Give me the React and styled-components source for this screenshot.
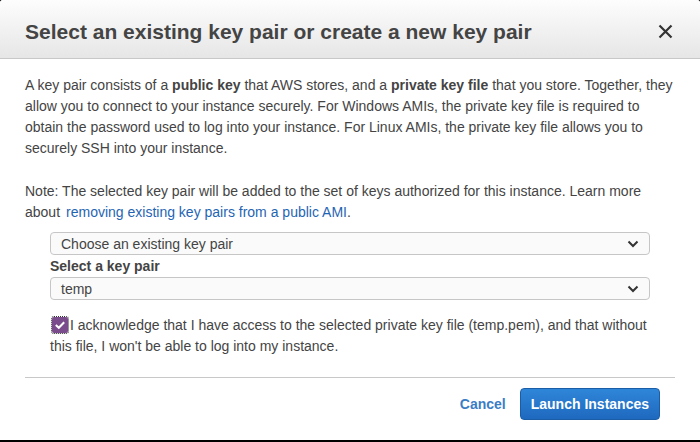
import React, { useState } from 'react';
import styled, { createGlobalStyle } from 'styled-components';

const GlobalStyle = createGlobalStyle`
  html, body {
    margin: 0;
    padding: 0;
    background: #000;
  }
  body {
    font-family: "Liberation Sans", Arial, sans-serif;
    color: #444;
  }
`;

const Modal = styled.div`
  width: 700px;
  height: 440px;
  background: #fff;
  border-radius: 3px 3px 0 0;
  overflow: hidden;
  display: flex;
  flex-direction: column;
`;

const Header = styled.div`
  height: 59px;
  box-sizing: border-box;
  padding: 5px 25px 0;
  display: flex;
  align-items: center;
  justify-content: space-between;
  background: linear-gradient(to bottom, #fdfdfd, #e6e6e6);
  border-bottom: 1px solid #c8c8c8;
`;

const Title = styled.h2`
  margin: 0;
  font-size: 21px;
  font-weight: bold;
  color: #444;
`;

const CloseButton = styled.button`
  border: none;
  background: none;
  padding: 0;
  margin-right: 1px;
  width: 18px;
  height: 18px;
  cursor: pointer;
  display: flex;
  align-items: center;
  justify-content: center;
`;

const Body = styled.div`
  padding: 0 25px;
  font-size: 14px;
  line-height: 21px;
`;

const Paragraph = styled.p`
  margin: ${(p) => p.$top || 0}px 0 0;
`;

const Link = styled.a`
  color: #1f65b3;
  text-decoration: none;
  margin-left: 6px;
`;

const Fields = styled.div`
  padding: 9px 50px 0;
  display: flex;
  flex-direction: column;
`;

const SelectBox = styled.div`
  height: 23px;
  box-sizing: border-box;
  border: 1px solid #c6c6c6;
  border-radius: 4px;
  background: #fafafa;
  display: flex;
  align-items: center;
  justify-content: space-between;
  padding: 0 10px;
  font-size: 14px;
  color: #444;
`;

const Label = styled.label`
  font-size: 14px;
  font-weight: bold;
  color: #444;
  line-height: 22px;
  margin: 0;
`;

const CheckRow = styled.div`
  margin-top: 15px;
  font-size: 14px;
  line-height: 21px;
  color: #444;
`;

const Check = styled.span`
  display: inline-block;
  width: 16px;
  height: 16px;
  background: #7a4c8c;
  border-radius: 2px;
  outline: 1px dotted #333;
  outline-offset: 0;
  vertical-align: -3px;
  margin: 0 2px 0 2px;
  position: relative;
`;

const Divider = styled.hr`
  margin: 20px 25px 0;
  border: none;
  border-top: 1px solid #c8c8c8;
`;

const Footer = styled.div`
  display: flex;
  justify-content: flex-end;
  align-items: center;
  gap: 14px;
  padding: 10px 40px 0 25px;
`;

const CancelButton = styled.button`
  border: none;
  background: none;
  font-family: inherit;
  font-size: 14px;
  font-weight: bold;
  color: #3b7dc5;
  padding: 0;
  cursor: pointer;
`;

const LaunchButton = styled.button`
  height: 32px;
  padding: 0 10px;
  border: 1px solid #1b5ea8;
  border-radius: 4px;
  background: linear-gradient(to bottom, #2f86d8, #1e69bf);
  color: #fff;
  font-family: inherit;
  font-size: 14px;
  font-weight: bold;
  cursor: pointer;
`;

const Chevron = () => (
  <svg width="12" height="8" viewBox="0 0 12 8">
    <path d="M1.5 1.5 L6 6 L10.5 1.5" stroke="#333" strokeWidth="2" fill="none" />
  </svg>
);

export default function App() {
  const [checked, setChecked] = useState(true);
  return (
    <>
      <GlobalStyle />
      <Modal>
        <Header>
          <Title>Select an existing key pair or create a new key pair</Title>
          <CloseButton aria-label="Close">
            <svg width="15" height="15" viewBox="0 0 15 15">
              <path d="M1.5 1.5 L13.5 13.5 M13.5 1.5 L1.5 13.5" stroke="#333" strokeWidth="2.2" />
            </svg>
          </CloseButton>
        </Header>
        <Body>
          <Paragraph $top={16}>
            A key pair consists of a <b>public key</b> that AWS stores, and a <b>private key file</b> that you
            store. Together, they allow you to connect to your instance securely. For Windows AMIs, the private
            key file is required to obtain the password used to log into your instance. For Linux AMIs, the
            private key file allows you to securely SSH into your instance.
          </Paragraph>
          <Paragraph $top={22}>
            Note: The selected key pair will be added to the set of keys authorized for this instance. Learn more
            about<Link href="#">removing existing key pairs from a public AMI</Link>.
          </Paragraph>
        </Body>
        <Fields>
          <SelectBox>
            <span>Choose an existing key pair</span>
            <Chevron />
          </SelectBox>
          <Label>Select a key pair</Label>
          <SelectBox>
            <span>temp</span>
            <Chevron />
          </SelectBox>
          <CheckRow onClick={() => setChecked(!checked)}>
            <Check>
              {checked && (
                <svg width="16" height="16" viewBox="0 0 16 16" style={{ position: 'absolute', left: 0, top: 0 }}>
                  <path d="M3.8 8 L6.8 10.8 L12.2 5.2" stroke="#fff" strokeWidth="2" fill="none" />
                </svg>
              )}
            </Check>
            I acknowledge that I have access to the selected private key file (temp.pem), and that without this
            file, I won't be able to log into my instance.
          </CheckRow>
        </Fields>
        <Divider />
        <Footer>
          <CancelButton>Cancel</CancelButton>
          <LaunchButton>Launch Instances</LaunchButton>
        </Footer>
      </Modal>
    </>
  );
}
